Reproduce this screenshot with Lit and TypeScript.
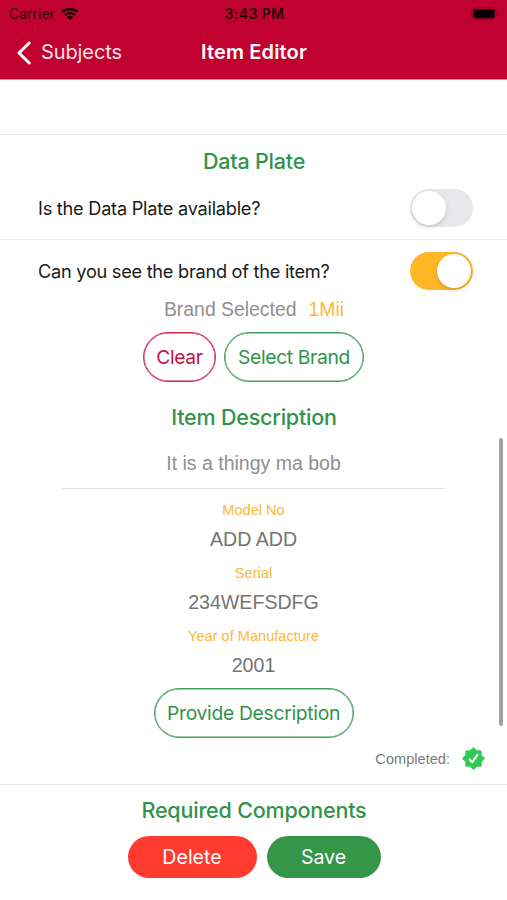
import { LitElement, html, css, svg } from "lit";
import { customElement, property } from "lit/decorators.js";
import { classMap } from "lit/directives/class-map.js";

@customElement("toggle-switch")
class ToggleSwitch extends LitElement {
  @property({ type: Boolean }) on = false;

  static styles = css`
    :host { display: block; }
    .track {
      box-sizing: border-box;
      display: flex;
      width: 63px;
      height: 38px;
      padding: 2px;
      border-radius: 19px;
      background: #e8e8ea;
    }
    .track.on { justify-content: flex-end; background: #ffb627; }
    .knob {
      width: 34px;
      height: 34px;
      border-radius: 50%;
      background: #fff;
      box-shadow: 0 2px 5px rgba(0, 0, 0, 0.15);
    }
  `;

  render() {
    return html`<div class=${classMap({ track: true, on: this.on })}><div class="knob"></div></div>`;
  }
}

const wifi = svg`
  <path d="M1 6.1 C5.5 2.1 12.5 2.1 17 6.1" />
  <path d="M3.9 9 C6.8 6.5 11.2 6.5 14.1 9" />`;

@customElement("app-root")
class AppRoot extends LitElement {
  static styles = css`
    :host {
      display: flex;
      flex-direction: column;
      position: relative;
      width: 507px;
      height: 900px;
      overflow: hidden;
      background: #fff;
      color: #1a1a1a;
      font-family: Inter, "Liberation Sans", sans-serif;
      white-space: nowrap;
    }
    svg { display: block; }
    header { height: 80px; background: #c10230; border-bottom: 1px solid #e593a6; box-sizing: border-box; }
    .status {
      display: grid;
      grid-template-columns: 1fr auto 1fr;
      align-items: center;
      height: 27px;
      padding: 0 7px 0 9px;
      color: #26040c;
      font-size: 14px;
      line-height: 27px;
    }
    .carrier { display: flex; align-items: center; gap: 6px; letter-spacing: 0; }
    .time { font-weight: 600; letter-spacing: 0.4px; }
    .battery { justify-self: end; }
    .nav {
      display: grid;
      grid-template-columns: 1fr auto 1fr;
      align-items: center;
      height: 51px;
      padding: 0 17px 0 17px;
      color: #fff;
      font-size: 20px;
      line-height: 51px;
    }
    .back { display: flex; align-items: center; gap: 9px; letter-spacing: -0.1px; color: #fbe3e8; }
    .title { font-weight: 600; letter-spacing: 0.15px; padding-left: 1px; }
    .spacer { height: 54px; border-bottom: 1px solid #e9e9e9; }
    h2 {
      margin: 0;
      height: 52px;
      line-height: 52px;
      padding-left: 1px;
      text-align: center;
      color: #31934a;
      font-size: 21.5px;
      font-weight: 500;
      letter-spacing: -0.2px;
    }
    .row {
      display: flex;
      align-items: center;
      justify-content: space-between;
      padding: 0 34px 0 38px;
      font-size: 18.2px;
    }
    .first { height: 42px; padding-bottom: 10px; border-bottom: 1px solid #ececec; }
    .second { height: 60px; padding-top: 1px; }
    .q1 { letter-spacing: -0.25px; }
    .q2 { letter-spacing: -0.27px; }
    .arial { font-family: "Liberation Sans", Arial, sans-serif; }
    .brand {
      display: flex;
      justify-content: center;
      gap: 12px;
      height: 31px;
      padding-left: 1px;
      line-height: 17px;
      font-size: 19.4px;
      color: #8f8f8f;
    }
    .brand b { font-weight: 400; color: #fbb83a; }
    .buttons { display: flex; justify-content: center; }
    .pill {
      box-sizing: border-box;
      height: 50px;
      line-height: 49px;
      border: 1px solid #45a05d;
      box-shadow: inset 0 0 0 0.5px #45a05d;
      border-radius: 25px;
      text-align: center;
      font-size: 19.3px;
      color: #31934a;
      background: #fff;
    }
    .outlined { gap: 8px; height: 50px; }
    .clear { width: 73px; border-color: #cd2750; box-shadow: inset 0 0 0 0.5px #cd2750; color: #c8133e; letter-spacing: -0.4px; }
    .select { width: 140px; letter-spacing: -0.35px; }
    .provide { width: 200px; letter-spacing: -0.3px; }
    h2.desc { height: 69px; line-height: 70px; }
    .note {
      width: 383px;
      height: 37px;
      margin: 0 auto;
      line-height: 24px;
      border-bottom: 1px solid #e2e2e2;
      text-align: center;
      font-size: 19.5px;
      color: #8f8f8f;
    }
    dl { margin: 8px 0 2px; text-align: center; }
    dt { height: 26px; line-height: 26px; font-size: 14.6px; color: #fbb83a; }
    dd { margin: 0; height: 37px; line-height: 32px; font-size: 19.6px; color: #747474; }
    .completed {
      display: flex;
      align-items: center;
      justify-content: flex-end;
      gap: 12px;
      height: 41px;
      padding: 0 22px 5px 0;
      border-bottom: 1px solid #e9e9e9;
      font-size: 14.6px;
      color: #7b7b7b;
    }
    h2.req { height: 51px; line-height: 50px; }
    .actions { gap: 10px; padding-left: 1px; }
    .solid { height: 42px; line-height: 43px; border: 0; box-shadow: none; color: #fff; font-size: 19.6px; }
    .delete { width: 129px; background: #ff3b30; }
    .save { width: 114px; background: #359549; letter-spacing: -0.1px; }
    .scrollbar {
      position: absolute;
      left: 499px;
      top: 438px;
      width: 4px;
      height: 288px;
      border-radius: 2px;
      background: #a2a2a2;
    }
  `;

  render() {
    return html`
      <header>
        <div class="status">
          <div class="carrier">
            <span>Carrier</span>
            <svg width="18" height="15" viewBox="0 0 18 15" fill="none" stroke="#18040a" stroke-width="2.4">
              ${wifi}
              <path d="M5.8 10.9 Q9 8.7 12.2 10.9 L9 14 Z" fill="#18040a" stroke="none" />
            </svg>
          </div>
          <div class="time">3:43 PM</div>
          <svg class="battery" width="29" height="14" viewBox="0 0 29 14">
            <rect x="0.7" y="0.7" width="24.4" height="12" rx="3.4" fill="none" stroke="#8d0224" />
            <rect x="2.2" y="2.2" width="21.4" height="9" rx="2" fill="#050001" />
            <path d="M26.5 4.3 Q29 6.7 26.5 9 Z" fill="#8d0224" />
          </svg>
        </div>
        <div class="nav">
          <div class="back">
            <svg width="15" height="24" viewBox="0 0 15 24" fill="none" stroke="#fff" stroke-width="3" stroke-linecap="round" stroke-linejoin="round">
              <path d="M12.2 2 L2 12 L12.2 22" />
            </svg>
            <span>Subjects</span>
          </div>
          <div class="title">Item Editor</div>
        </div>
      </header>
      <div class="spacer"></div>
      <h2>Data Plate</h2>
      <div class="row first"><span class="q1">Is the Data Plate available?</span><toggle-switch></toggle-switch></div>
      <div class="row second"><span class="q2">Can you see the brand of the item?</span><toggle-switch on></toggle-switch></div>
      <div class="brand arial"><span>Brand Selected</span><b>1Mii</b></div>
      <div class="buttons outlined">
        <div class="pill clear">Clear</div>
        <div class="pill select">Select Brand</div>
      </div>
      <h2 class="desc">Item Description</h2>
      <div class="note arial">It is a thingy ma bob</div>
      <dl class="arial">
        <dt>Model No</dt><dd>ADD ADD</dd>
        <dt>Serial</dt><dd>234WEFSDFG</dd>
        <dt>Year of Manufacture</dt><dd>2001</dd>
      </dl>
      <div class="buttons"><div class="pill provide">Provide Description</div></div>
      <div class="completed arial">
        <span>Completed:</span>
        <svg width="23" height="23" viewBox="0 0 24 24">
          <path fill="#34c759" stroke="#34c759" stroke-width="3.4" stroke-linejoin="round"
            d="M12 2.2 L14.8 5.2 L18.9 5.1 L18.8 9.2 L21.8 12 L18.8 14.8 L18.9 18.9 L14.8 18.8 L12 21.8 L9.2 18.8 L5.1 18.9 L5.2 14.8 L2.2 12 L5.2 9.2 L5.1 5.1 L9.2 5.2 Z" />
          <path fill="none" stroke="#fff" stroke-width="2" stroke-linecap="round" stroke-linejoin="round" d="M8 12.8 L10.8 16 L16 8.2" />
        </svg>
      </div>
      <h2 class="req">Required Components</h2>
      <div class="buttons actions">
        <div class="pill solid delete">Delete</div>
        <div class="pill solid save">Save</div>
      </div>
      <div class="scrollbar"></div>
    `;
  }
}
